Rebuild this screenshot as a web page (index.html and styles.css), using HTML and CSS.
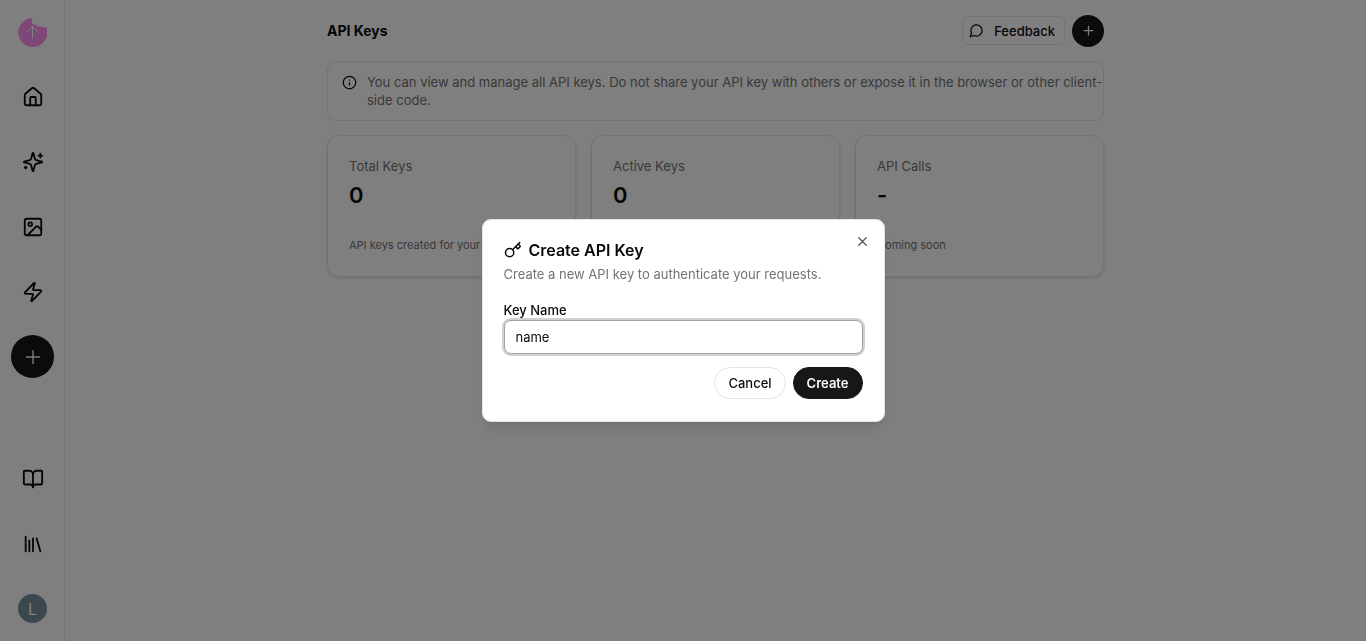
FILE: index.html
```html
<!DOCTYPE html>
<html lang="en">
<head>
    <meta charset="UTF-8">
    <meta name="viewport" content="width=device-width, initial-scale=1.0">
    <title>API Keys</title>
    <link rel="stylesheet" href="styles.css">
</head>
<body>
    <div class="app">
        <nav class="sidebar" aria-label="Main">
            <a class="logo" href="#" aria-label="Start">
                <svg viewBox="0 0 29 29">
                    <path class="logo-shape" d="M14.3 0A14.500 14.500 0 1 0 28.300 9.300C25.500 10.200 23.500 8.800 22.500 8.200C20.500 8.900 18.600 8.300 18 6.800C15.500 7 13.200 5.500 13.700 3.200C13.800 2 14.600 1.200 14.300 0Z"/>
                    <path class="logo-arrow" d="M14.500 20.500V8.500M8.500 14.500L14.500 8.500L20.500 14.500"/>
                </svg>
            </a>
            <div class="nav-group">
                <a class="nav-link" href="#" aria-label="Home">
                    <svg class="icon" viewBox="0 0 24 24"><path d="M15 21v-8a1 1 0 0 0-1-1h-4a1 1 0 0 0-1 1v8"/><path d="M3 10a2 2 0 0 1 .709-1.528l7-5.999a2 2 0 0 1 2.582 0l7 5.999A2 2 0 0 1 21 10v9a2 2 0 0 1-2 2H5a2 2 0 0 1-2-2z"/></svg>
                </a>
                <a class="nav-link" href="#" aria-label="Generate">
                    <svg class="icon" viewBox="0 0 24 24"><path d="M9.937 15.500A2 2 0 0 0 8.500 14.063l-6.135-1.582a.5.5 0 0 1 0-.962L8.500 9.936A2 2 0 0 0 9.937 8.500l1.582-6.135a.5.5 0 0 1 .963 0L14.063 8.500A2 2 0 0 0 15.500 9.937l6.135 1.581a.5.5 0 0 1 0 .964L15.500 14.063a2 2 0 0 0-1.437 1.437l-1.582 6.135a.5.5 0 0 1-.963 0z"/><path d="M20 3v4M22 5h-4M4 17v2M5 18H3"/></svg>
                </a>
                <a class="nav-link" href="#" aria-label="Images">
                    <svg class="icon" viewBox="0 0 24 24"><rect x="3" y="3" width="18" height="18" rx="2"/><circle cx="9" cy="9" r="2"/><path d="m21 15-3.086-3.086a2 2 0 0 0-2.828 0L6 21"/></svg>
                </a>
                <a class="nav-link" href="#" aria-label="Activity">
                    <svg class="icon" viewBox="0 0 24 24"><path d="M4 14a1 1 0 0 1-.78-1.630l9.900-10.200a.5.5 0 0 1 .86.460l-1.920 6.020A1 1 0 0 0 13 10h7a1 1 0 0 1 .78 1.630l-9.900 10.200a.5.5 0 0 1-.86-.460l1.920-6.020A1 1 0 0 0 11 14z"/></svg>
                </a>
                <button class="round-button nav-add" type="button" aria-label="Create">
                    <svg class="icon" viewBox="0 0 24 24"><path d="M5 12h14M12 5v14"/></svg>
                </button>
            </div>
            <div class="nav-group nav-bottom">
                <a class="nav-link" href="#" aria-label="Docs">
                    <svg class="icon" viewBox="0 0 24 24"><path d="M12 7v14"/><path d="M3 18a1 1 0 0 1-1-1V4a1 1 0 0 1 1-1h5a4 4 0 0 1 4 4 4 4 0 0 1 4-4h5a1 1 0 0 1 1 1v13a1 1 0 0 1-1 1h-6a3 3 0 0 0-3 3 3 3 0 0 0-3-3z"/></svg>
                </a>
                <a class="nav-link" href="#" aria-label="Library">
                    <svg class="icon" viewBox="0 0 24 24"><path d="m16 6 4 14M12 6v14M8 8v12M4 4v16"/></svg>
                </a>
                <button class="avatar" type="button">L</button>
            </div>
        </nav>

        <main class="content">
            <header class="page-header">
                <h1>API Keys</h1>
                <div class="page-actions">
                    <button class="feedback" type="button">
                        <svg class="icon icon-small" viewBox="0 0 24 24"><path d="M7.900 20A9 9 0 1 0 4 16.100L2 22Z"/></svg>
                        Feedback
                    </button>
                    <button class="round-button" type="button" aria-label="Create API key">
                        <svg class="icon icon-small" viewBox="0 0 24 24"><path d="M5 12h14M12 5v14"/></svg>
                    </button>
                </div>
            </header>

            <div class="notice">
                <svg class="icon icon-small" viewBox="0 0 24 24"><circle cx="12" cy="12" r="10"/><path d="M12 16v-4M12 8h.01"/></svg>
                <p>You can view and manage all API keys. Do not share your API key with others or expose it in the browser or other client-side code.</p>
            </div>

            <section class="stats">
                <div class="card">
                    <h2>Total Keys</h2>
                    <p class="value">0</p>
                    <p class="hint">API keys created for your</p>
                </div>
                <div class="card">
                    <h2>Active Keys</h2>
                    <p class="value">0</p>
                </div>
                <div class="card">
                    <h2>API Calls</h2>
                    <p class="value">-</p>
                    <p class="hint">Coming soon</p>
                </div>
            </section>
        </main>
    </div>

    <div class="overlay">
        <form class="dialog" role="dialog" aria-modal="true" aria-labelledby="dialog-title">
            <button class="close" type="button" aria-label="Close">
                <svg class="icon icon-small" viewBox="0 0 24 24"><path d="M18 6 6 18M6 6l12 12"/></svg>
            </button>
            <h2 id="dialog-title">
                <svg class="icon icon-key" viewBox="0 0 24 24"><path d="m15.500 7.500 2.300 2.300a1 1 0 0 0 1.400 0l2.100-2.100a1 1 0 0 0 0-1.400L19 4"/><path d="m21 2-9.600 9.600"/><circle cx="7.500" cy="15.500" r="5.500"/></svg>
                Create API Key
            </h2>
            <p class="description">Create a new API key to authenticate your requests.</p>
            <label for="key-name">Key Name</label>
            <input id="key-name" type="text" value="name" autocomplete="off">
            <div class="dialog-actions">
                <button class="button" type="button">Cancel</button>
                <button class="button primary" type="submit">Create</button>
            </div>
        </form>
    </div>
</body>
</html>
```
FILE: styles.css
```css
* {
    box-sizing: border-box;
}

body {
    margin: 0;
    font-family: Inter, "Liberation Sans", sans-serif;
    font-size: 13px;
    line-height: 18px;
    color: #0a0a0a;
    background: #fff;
}

h1, h2, p {
    margin: 0;
}

button, input {
    font: inherit;
    color: inherit;
}

button {
    display: flex;
    align-items: center;
    justify-content: center;
    padding: 0;
    border: 0;
    background: none;
    cursor: pointer;
}

.icon {
    width: 22px;
    height: 22px;
    flex: none;
    fill: none;
    stroke: currentColor;
    stroke-width: 2;
    stroke-linecap: round;
    stroke-linejoin: round;
}

.icon-small {
    width: 15px;
    height: 15px;
}

.app {
    display: flex;
    min-height: 100vh;
}

/* sidebar */
.sidebar {
    display: flex;
    flex-direction: column;
    align-items: center;
    width: 65px;
    padding: 18px 0 18px 1px;
    border-right: 1px solid #e5e5e5;
}

.logo {
    width: 29px;
    height: 29px;
}

.logo svg {
    display: block;
}

.logo-shape {
    fill: #ff8cf0;
}

.logo-arrow {
    fill: none;
    stroke: #fff;
    stroke-width: 1;
}

.nav-group {
    display: flex;
    flex-direction: column;
    align-items: center;
    gap: 22px;
    margin-top: 28px;
}

.nav-bottom {
    margin-top: auto;
}

.nav-link {
    display: flex;
    align-items: center;
    justify-content: center;
    width: 43px;
    height: 43px;
    color: #0a0a0a;
}

.round-button {
    width: 32px;
    height: 32px;
    border-radius: 50%;
    background: #171717;
    color: #fafafa;
}

.nav-add {
    width: 43px;
    height: 43px;
}

.nav-add .icon {
    stroke-width: 1.5;
}

.avatar {
    width: 29px;
    height: 29px;
    margin-top: 7px;
    border-radius: 50%;
    background: #78909c;
    color: #fff;
    font-size: 16px;
}

/* page */
.content {
    flex: 1;
    max-width: 777px;
    margin: 0 auto;
    padding-top: 14px;
}

.page-header {
    display: flex;
    align-items: center;
    justify-content: space-between;
    height: 33px;
}

.page-header h1 {
    font-size: 14px;
    font-weight: 700;
}

.page-actions {
    display: flex;
    align-items: center;
    gap: 7px;
}

.feedback {
    gap: 10px;
    height: 29px;
    padding: 0 9px 0 6px;
    border: 1px solid #e5e5e5;
    border-radius: 6px;
    font-weight: 500;
}

.notice {
    display: flex;
    gap: 10px;
    margin-top: 14px;
    padding: 11px 0 11px 14px;
    border: 1px solid #e5e5e5;
    border-radius: 9px;
    color: #737373;
}

.notice .icon {
    margin-top: 2px;
    color: #0a0a0a;
}

.stats {
    display: grid;
    grid-template-columns: repeat(3, 1fr);
    gap: 15px;
    margin-top: 14px;
}

.card {
    padding: 21px;
    border: 1px solid #e5e5e5;
    border-radius: 12px;
    box-shadow: 0 1px 3px rgba(0, 0, 0, 0.15);
}

.card h2 {
    font-size: 13px;
    font-weight: 400;
    color: #737373;
}

.card .value {
    margin-top: 6px;
    font-size: 22px;
    line-height: 29px;
    font-weight: 600;
}

.card .hint {
    margin: 26px 0 1px;
    font-size: 11px;
    color: #737373;
}

/* dialog */
.overlay {
    position: fixed;
    inset: 0;
    display: flex;
    align-items: center;
    justify-content: center;
    background: rgba(0, 0, 0, 0.5);
}

.dialog {
    position: relative;
    width: 403px;
    max-width: 100%;
    padding: 21px 21px 22px;
    border: 1px solid #e5e5e5;
    border-radius: 9px;
    background: #fff;
    box-shadow: 0 9px 14px -3px rgba(0, 0, 0, 0.1), 0 4px 6px -4px rgba(0, 0, 0, 0.1);
}

.dialog h2 {
    display: flex;
    align-items: center;
    gap: 7px;
    font-size: 16px;
    font-weight: 600;
}

.icon-key {
    width: 18px;
    height: 18px;
}

.description {
    margin-top: 6px;
    color: #737373;
}

.dialog label {
    display: block;
    margin: 18px 0 1px;
    font-weight: 500;
}

.dialog input {
    display: block;
    width: 100%;
    height: 34px;
    padding: 0 11px;
    border: 1px solid #a1a1a1;
    border-radius: 7px;
    outline: 0;
    box-shadow: 0 0 0 2px #d0d0d0;
}

.dialog-actions {
    display: flex;
    justify-content: flex-end;
    gap: 7px;
    margin-top: 13px;
}

.button {
    height: 32px;
    padding: 0 13px;
    border: 1px solid #e5e5e5;
    border-radius: 16px;
    font-weight: 500;
}

.primary {
    border-color: #171717;
    background: #171717;
    color: #fafafa;
    font-weight: 600;
}

.close {
    position: absolute;
    top: 14px;
    right: 14px;
    opacity: 0.7;
}
```
